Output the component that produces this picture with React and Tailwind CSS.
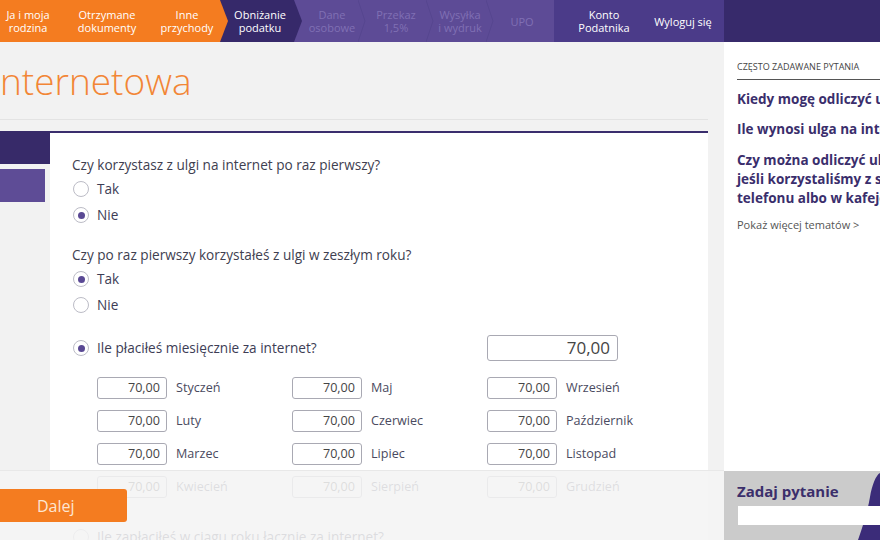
import React from 'react';

const Chevron = ({ fill }) => (
  <svg className="absolute top-0 right-[-8px] h-[42px] w-[8px] z-10" viewBox="0 0 8 42" preserveAspectRatio="none">
    <polygon points="0,0 8,21 0,42" fill={fill} />
  </svg>
);

const Divider = () => (
  <svg className="absolute top-0 right-[-4px] h-[42px] w-[8px]" viewBox="0 0 8 42">
    <polyline points="0,0 7,21 0,42" fill="none" stroke="#56468f" strokeWidth="1" />
  </svg>
);

const NavItem = ({ w, children, faded, divider }) => (
  <div className={`relative flex items-center justify-center text-center ${w} ${faded ? 'text-[#8070b4]' : 'text-white'}`}>
    <span>{children}</span>
    {divider && <Divider />}
  </div>
);

const Radio = ({ checked }) => (
  <span className="ml-[1px] flex h-[16px] w-[16px] shrink-0 items-center justify-center rounded-full border border-[#bcbcc6] bg-white">
    {checked && <span className="h-[7px] w-[7px] rounded-full bg-[#5a4994]" />}
  </span>
);

const RadioRow = ({ checked, children }) => (
  <div className="flex h-[26px] items-center gap-[8px] text-[13.6px] text-[#3d3d55]">
    <Radio checked={checked} />
    <span>{children}</span>
  </div>
);

const months = [
  ['Styczeń', 'Maj', 'Wrzesień'],
  ['Luty', 'Czerwiec', 'Październik'],
  ['Marzec', 'Lipiec', 'Listopad'],
  ['Kwiecień', 'Sierpień', 'Grudzień'],
];

const MonthField = ({ label }) => (
  <div className="flex h-[22px] items-center gap-[9px]">
    <div className="flex h-[22px] w-[70px] items-center justify-end rounded-[3px] border border-[#a9a9b3] pr-[6px] text-[12.6px] text-[#454545]">
      70,00
    </div>
    <span className="text-[12.6px] text-[#4a4a60]">{label}</span>
  </div>
);

export default function App() {
  return (
    <div className="relative h-[540px] w-[880px] overflow-hidden bg-[#f2f2f2] font-['Open_Sans',sans-serif]">
      {/* górna nawigacja */}
      <nav className="flex h-[42px] text-[11px] leading-[13px]">
        <div className="relative z-30 flex w-[220px] bg-[#f47c20]">
          <NavItem w="w-[56px]">Ja i moja<br />rodzina</NavItem>
          <NavItem w="w-[102px]">Otrzymane<br />dokumenty</NavItem>
          <NavItem w="w-[58px]">Inne<br />przychody</NavItem>
          <Chevron fill="#f47c20" />
        </div>
        <div className="relative z-20 flex w-[74px] items-center justify-center bg-[#36296a] pl-[6px] text-center text-white">
          <span>Obniżanie<br />podatku</span>
          <Chevron fill="#36296a" />
        </div>
        <div className="flex w-[260px] bg-[#5d4b96] pl-[8px]">
          <NavItem w="w-[60px]" faded divider>Dane<br />osobowe</NavItem>
          <NavItem w="w-[68px]" faded divider>Przekaz<br />1,5%</NavItem>
          <NavItem w="w-[60px]" faded divider>Wysyłka<br />i wydruk</NavItem>
          <NavItem w="w-[64px]" faded>UPO</NavItem>
        </div>
        <div className="flex w-[170px] bg-[#4b3b89]">
          <NavItem w="w-[100px]">Konto<br />Podatnika</NavItem>
          <NavItem w="w-[58px]">Wyloguj się</NavItem>
        </div>
        <div className="flex-1 bg-[#372a6b]" />
      </nav>

      <div className="flex">
        {/* główna kolumna */}
        <div className="w-[708px] shrink-0">
          <div className="flex h-[78px] items-center border-b border-[#e3e3e3]">
            <h1 className="text-[37px] font-light leading-none text-[#f28636]">nternetowa</h1>
          </div>

          <div className="mt-[11px] flex">
            <div className="w-[50px] shrink-0">
              <div className="h-[33px] bg-[#372a69]" />
              <div className="mt-[5px] h-[33px] w-[45px] bg-[#5e4c96]" />
            </div>

            <div className="h-[420px] flex-1 border-t-2 border-[#3a2d6d] bg-white pl-[22px] pt-[22px]">
              <p className="flex h-[20px] items-center text-[13.6px] text-[#404050]">Czy korzystasz z ulgi na internet po raz pierwszy?</p>
              <div className="mt-[1px]">
                <RadioRow>Tak</RadioRow>
                <RadioRow checked>Nie</RadioRow>
              </div>

              <p className="mt-[17px] flex h-[20px] items-center text-[13.6px] text-[#404050]">Czy po raz pierwszy korzystałeś z ulgi w zeszłym roku?</p>
              <div className="mt-[1px]">
                <RadioRow checked>Tak</RadioRow>
                <RadioRow>Nie</RadioRow>
              </div>

              <div className="mt-[17px] flex h-[26px] items-center">
                <div className="w-[415px]">
                  <RadioRow checked>Ile płaciłeś miesięcznie za internet?</RadioRow>
                </div>
                <div className="flex h-[26px] w-[131px] items-center justify-end rounded-[3px] border border-[#a9a9b3] pr-[7px] text-[17px] text-[#454545]">
                  70,00
                </div>
              </div>

              <div className="mt-[16px] flex flex-col gap-[11px] pl-[25px]">
                {months.map((row, i) => (
                  <div key={i} className="grid grid-cols-[195px_195px_195px]">
                    {row.map((m) => (
                      <MonthField key={m} label={m} />
                    ))}
                  </div>
                ))}
              </div>

              <div className="mt-[26px]">
                <RadioRow>Ile zapłaciłeś w ciągu roku łącznie za internet?</RadioRow>
              </div>
            </div>
          </div>
        </div>

        {/* prawa kolumna FAQ */}
        <aside className="ml-[16px] h-[498px] w-[240px] shrink-0 bg-white px-[13px] pt-[19px]">
          <div className="border-b border-[#555] pb-[6px] text-[9px] uppercase leading-[12px] text-[#444]">
            Często zadawane pytania
          </div>
          <div className="mt-[10px] flex flex-col gap-[11px] text-[13.5px] font-bold leading-[19px] text-[#3a2e6c]">
            <p className="whitespace-nowrap">Kiedy mogę odliczyć ulgę internetową?</p>
            <p className="whitespace-nowrap">Ile wynosi ulga na internet?</p>
            <p className="mt-[1px] whitespace-nowrap">
              Czy można odliczyć ulgę,<br />jeśli korzystaliśmy z sieci w<br />telefonu albo w kafejce?
            </p>
          </div>
          <p className="mt-[9px] text-[11px] leading-[15px] text-[#555]">Pokaż więcej tematów &gt;</p>
        </aside>
      </div>

      {/* przyklejona stopka */}
      <div className="absolute bottom-0 left-0 h-[70px] w-[724px] border-t border-[#e8e8e8] bg-[#f4f4f4]/[0.87] pt-[18px]">
        <button className="flex h-[33px] w-[127px] items-center rounded-r-[3px] bg-[#f47c20] pl-[37px] text-[16px] text-[#fde6d2]">
          Dalej
        </button>
      </div>

      <div className="absolute bottom-0 right-0 h-[69px] w-[156px] overflow-hidden bg-[#cbcbcb] pl-[13px] pt-[10px]">
        <svg className="absolute right-0 top-0 h-[69px] w-[26px]" viewBox="0 0 26 69">
          <path d="M26 2 C22 4 18 14 16 26 C14 38 10 52 4 69 L26 69 Z" fill="#3b2c79" />
        </svg>
        <p className="relative text-[15px] font-bold leading-[20px] text-[#3b2f6b]">Zadaj pytanie</p>
        <div className="relative ml-[1px] mt-[5px] h-[19px] bg-white" />
      </div>
    </div>
  );
}
